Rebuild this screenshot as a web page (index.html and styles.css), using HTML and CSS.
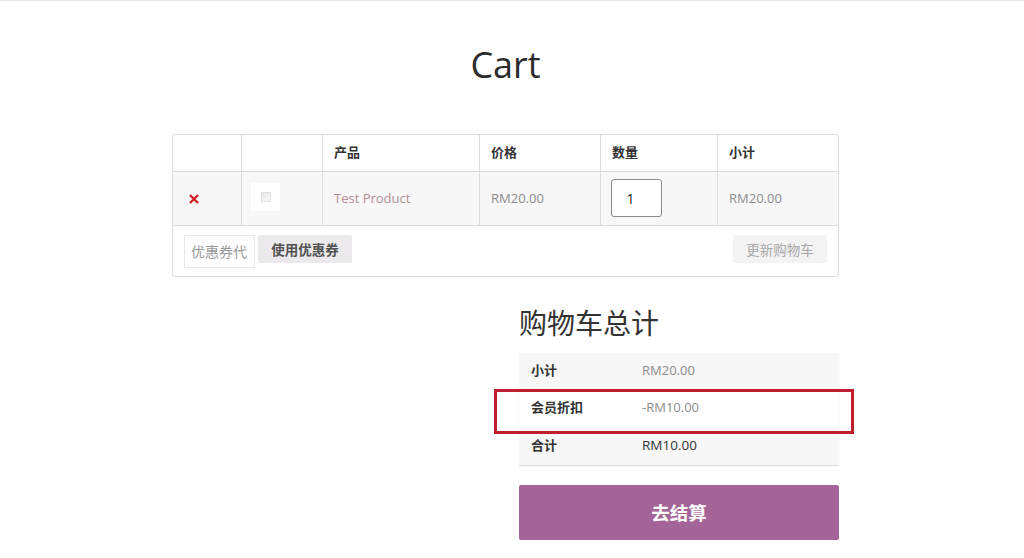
FILE: index.html
```html
<!DOCTYPE html>
<html lang="zh">
<head>
    <meta charset="UTF-8">
    <title>Cart</title>
    <link rel="stylesheet" href="styles.css">
</head>
<body>
    <div class="page">
        <h1 class="page-title">Cart</h1>

        <table class="cart-table">
            <colgroup>
                <col class="col-remove">
                <col class="col-thumb">
                <col class="col-name">
                <col class="col-price">
                <col class="col-qty">
                <col class="col-sub">
            </colgroup>
            <thead>
                <tr>
                    <th></th>
                    <th></th>
                    <th>产品</th>
                    <th>价格</th>
                    <th>数量</th>
                    <th>小计</th>
                </tr>
            </thead>
            <tbody>
                <tr class="cart-item">
                    <td class="remove-cell">
                        <svg class="remove-icon" viewBox="0 0 12 12" width="12" height="12">
                            <path d="M2 2 L10 10 M10 2 L2 10"></path>
                        </svg>
                    </td>
                    <td class="thumb-cell">
                        <div class="thumb">
                            <svg viewBox="0 0 10 10" width="10" height="10">
                                <rect x="0.5" y="0.5" width="9" height="9" fill="#ececec" stroke="#e0e0e0"></rect>
                                <path d="M1 9 L9 2 L9 9 Z" fill="#f6f6f6"></path>
                            </svg>
                        </div>
                    </td>
                    <td><a class="product-link" href="#">Test Product</a></td>
                    <td>RM20.00</td>
                    <td class="qty-cell"><input class="qty-input" type="text" value="1"></td>
                    <td>RM20.00</td>
                </tr>
                <tr>
                    <td class="actions" colspan="6">
                        <div class="actions-row">
                            <div class="coupon">
                                <input class="coupon-input" type="text" placeholder="优惠券代码">
                                <button class="btn btn-coupon">使用优惠券</button>
                            </div>
                            <button class="btn btn-update">更新购物车</button>
                        </div>
                    </td>
                </tr>
            </tbody>
        </table>

        <div class="cart-totals">
            <h2 class="totals-title">购物车总计</h2>
            <div class="totals-wrap">
                <table class="totals-table">
                    <tr class="shaded">
                        <th>小计</th>
                        <td>RM20.00</td>
                    </tr>
                    <tr>
                        <th>会员折扣</th>
                        <td>-RM10.00</td>
                    </tr>
                    <tr class="shaded">
                        <th>合计</th>
                        <td class="order-total">RM10.00</td>
                    </tr>
                </table>
                <div class="highlight-box"></div>
            </div>
            <a class="checkout-btn" href="#">去结算</a>
        </div>
    </div>
</body>
</html>
```

FILE: styles.css
```css
* {
    margin: 0;
    padding: 0;
    box-sizing: border-box;
}

body {
    background: #fff;
    border-top: 1px solid #e6e6e6;
    color: #8c8c8c;
    font-family: 'Open Sans', 'Noto Sans CJK SC', sans-serif;
    font-size: 13px;
    height: 558px;
    overflow: hidden;
}

.page {
    width: 667px;
    margin-left: 172px;
}

.page-title {
    color: #2b2b2b;
    font-size: 36px;
    font-weight: 400;
    line-height: 50px;
    text-align: center;
    padding-top: 39px;
    margin-bottom: 44px;
}

.cart-table {
    width: 666px;
    height: 142px;
    table-layout: fixed;
    border-collapse: separate;
    border-spacing: 0;
    border: 1px solid #dcdcdc;
    border-radius: 3px;
}

.col-remove { width: 69px; }
.col-thumb { width: 81px; }
.col-name { width: 157px; }
.col-price { width: 121px; }
.col-qty { width: 117px; }
.col-sub { width: 120px; }

.cart-table th,
.cart-table td {
    border-right: 1px solid #dcdcdc;
    border-bottom: 1px solid #dcdcdc;
    padding: 0 11px;
    text-align: left;
    vertical-align: middle;
}

.cart-table th:last-child,
.cart-table td:last-child {
    border-right: 0;
}

.cart-table th {
    color: #333;
    font-weight: 700;
    height: 37px;
    padding-bottom: 4px;
}

.cart-item td {
    background: #f7f7f7;
    height: 54px;
    padding-bottom: 2px;
}

.cart-item .thumb-cell {
    padding-left: 9px;
}

.cart-item .qty-cell {
    padding-left: 10px;
}

.remove-icon {
    display: block;
    margin-left: 4px;
    margin-top: 3px;
}

.remove-icon path {
    fill: none;
    stroke: #d0202a;
    stroke-width: 2.4;
}

.thumb {
    display: flex;
    align-items: center;
    justify-content: center;
    width: 29px;
    height: 28px;
    margin-bottom: 2px;
    background: #fff;
}

.product-link {
    color: #b68d95;
    text-decoration: none;
}

.qty-input {
    display: block;
    width: 51px;
    height: 38px;
    margin-top: 1px;
    border: 1px solid #8a8a8a;
    border-radius: 3px;
    padding-right: 12px;
    color: #222;
    font-family: inherit;
    font-size: 14px;
    text-align: center;
}

.cart-table .actions {
    border-bottom: 0;
    height: 50px;
}

.actions-row {
    display: flex;
    align-items: flex-start;
    justify-content: space-between;
}

.coupon {
    display: flex;
    align-items: flex-start;
    gap: 3px;
}

.coupon-input {
    width: 71px;
    height: 33px;
    border: 1px solid #e8e8e8;
    padding: 0 7px 0 6px;
    font-family: inherit;
    font-size: 14px;
}

.coupon-input::placeholder {
    color: #999;
}

.btn {
    height: 28px;
    border: 0;
    border-radius: 2px;
    font-family: inherit;
    font-size: 13.5px;
    font-weight: 700;
}

.btn-coupon {
    width: 94px;
    background: #ebe9eb;
    color: #515151;
}

.btn-update {
    width: 94px;
    background: #f4f3f4;
    color: #a8a8a8;
    font-weight: 400;
}

.cart-totals {
    width: 320px;
    margin-left: 347px;
    margin-top: 24px;
}

.totals-title {
    color: #333;
    font-size: 28px;
    font-weight: 400;
    line-height: 44px;
    margin-bottom: 8px;
}

.totals-wrap {
    position: relative;
}

.totals-table {
    width: 100%;
    height: 112px;
    border-collapse: collapse;
    box-shadow: 0 1px 1px #dedede;
}

.totals-table th,
.totals-table td {
    text-align: left;
    height: 37px;
    padding-bottom: 4px;
}

.totals-table th {
    width: 123px;
    padding-left: 12px;
    color: #333;
    font-weight: 700;
}

.totals-table .shaded {
    background: #f7f7f7;
}

.totals-table .order-total {
    color: #333;
    font-size: 13.5px;
    padding-bottom: 2px;
}

.highlight-box {
    position: absolute;
    left: -25px;
    top: 36px;
    width: 360px;
    height: 45px;
    border: 3px solid #bf1e2e;
}

.checkout-btn {
    display: block;
    height: 55px;
    margin-top: 20px;
    background: #a46497;
    border-radius: 2px;
    color: #fff;
    font-size: 18.5px;
    font-weight: 700;
    line-height: 55px;
    text-align: center;
    text-decoration: none;
}
```
